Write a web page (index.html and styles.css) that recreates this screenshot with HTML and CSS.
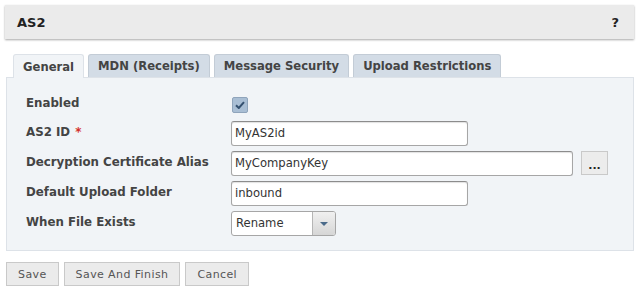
FILE: index.html
```html
<!DOCTYPE html>
<html lang="en">
<head>
    <meta charset="UTF-8">
    <title>AS2</title>
    <link rel="stylesheet" href="styles.css">
</head>
<body>
    <div class="dialog">
        <div class="titlebar">
            <span class="title">AS2</span>
            <span class="help">?</span>
        </div>

        <div class="tabs">
            <div class="tab active">General</div>
            <div class="tab">MDN (Receipts)</div>
            <div class="tab">Message Security</div>
            <div class="tab">Upload Restrictions</div>
        </div>

        <div class="panel">
            <div class="form">
                <label class="label first">Enabled</label>
                <div class="field">
                    <span class="checkbox">
                        <svg width="10" height="8" viewBox="0 0 10 8"><path d="M1 4.2 L3.8 7 L9 1.2" fill="none" stroke="#34506f" stroke-width="2"/></svg>
                    </span>
                </div>

                <label class="label">AS2 ID <span class="req">*</span></label>
                <div class="field"><input class="text" type="text" value="MyAS2id"></div>

                <label class="label">Decryption Certificate Alias</label>
                <div class="field">
                    <input class="text wide" type="text" value="MyCompanyKey">
                    <button class="browse">...</button>
                </div>

                <label class="label">Default Upload Folder</label>
                <div class="field"><input class="text" type="text" value="inbound"></div>

                <label class="label">When File Exists</label>
                <div class="field">
                    <div class="select">
                        <span class="select-value">Rename</span>
                        <span class="select-arrow"></span>
                    </div>
                </div>
            </div>
        </div>

        <div class="actions">
            <button class="btn">Save</button>
            <button class="btn">Save And Finish</button>
            <button class="btn">Cancel</button>
        </div>
    </div>
</body>
</html>
```

FILE: styles.css
```css
* {
    margin: 0;
    padding: 0;
    box-sizing: border-box;
}

body {
    font-family: "DejaVu Sans", Verdana, sans-serif;
    font-size: 12px;
    color: #333;
    background: #fff;
}

.dialog {
    padding: 5px 4px 0 6px;
}

.titlebar {
    height: 34px;
    margin-left: -1px;
    background: #ebebeb;
    box-shadow: 0 1px 2px rgba(0, 0, 0, 0.35);
    display: flex;
    align-items: center;
    justify-content: space-between;
    padding: 0 15px 0 12px;
    font-weight: bold;
    font-size: 13px;
    color: #222;
}

.tabs {
    display: flex;
    gap: 4px;
    margin-top: 15px;
    padding-left: 7px;
}

.tab {
    height: 23px;
    padding: 0 9px;
    display: flex;
    align-items: center;
    font-weight: bold;
    font-size: 11.6px;
    color: #444;
    background: #d3dce6;
    border: 1px solid #c3ccd6;
    border-bottom: none;
    border-radius: 3px 3px 0 0;
}

.tab.active {
    background: #f1f4f7;
    border-color: #dde2e8;
    height: 24px;
    margin-bottom: -1px;
    position: relative;
}

.panel {
    height: 174px;
    background: #f1f4f7;
    border: 1px solid #dde2e8;
    padding: 13px 0 0 19px;
}

.form {
    display: grid;
    grid-template-columns: 205px 1fr;
    grid-auto-rows: 24px;
    row-gap: 6px;
}

.label {
    font-weight: bold;
    font-size: 11.8px;
    color: #444;
    display: flex;
    align-items: center;
    padding-bottom: 3px;
}

.label.first {
    padding-bottom: 0;
}

.req {
    color: #d4302b;
    margin-left: 5px;
}

.field {
    display: flex;
    align-items: center;
}

.checkbox {
    width: 16px;
    height: 16px;
    margin: 4px 0 0 1px;
    background: #a9bed4;
    border: 1px solid #8fa4bb;
    border-radius: 2px;
    display: flex;
    align-items: center;
    justify-content: center;
}

.text {
    width: 237px;
    height: 25px;
    border: 1px solid #a6a6a6;
    border-top-color: #8c8c8c;
    border-radius: 3px;
    box-shadow: inset 0 1px 1px rgba(0, 0, 0, 0.12);
    background: #fff;
    padding: 0 3px;
    font-family: "DejaVu Sans", Verdana, sans-serif;
    font-size: 11.6px;
    color: #333;
}

.text.wide {
    width: 342px;
}

.browse {
    width: 27px;
    height: 24px;
    margin-left: 8px;
    background: #ececec;
    border: 1px solid #c9c9c9;
    font-family: "DejaVu Sans", Verdana, sans-serif;
    font-weight: bold;
    font-size: 11px;
    color: #222;
    padding-top: 4px;
}

.select {
    width: 105px;
    height: 25px;
    display: flex;
    border: 1px solid #a6a6a6;
    border-radius: 3px;
    background: #fff;
    overflow: hidden;
    font-size: 11.6px;
}

.select-value {
    flex: 1;
    padding-left: 4px;
    display: flex;
    align-items: center;
}

.select-arrow {
    width: 23px;
    border-left: 1px solid #b5b5b5;
    background: linear-gradient(#f0f0f0, #d6d6d6);
    position: relative;
}

.select-arrow:after {
    content: "";
    position: absolute;
    left: 7px;
    top: 10px;
    border-left: 4px solid transparent;
    border-right: 4px solid transparent;
    border-top: 4px solid #4a6a8a;
}

.actions {
    display: flex;
    gap: 5px;
    margin-top: 11px;
}

.btn {
    height: 24px;
    padding: 0 11px;
    background: #ebebeb;
    border: 1px solid #c9c9c9;
    font-family: "DejaVu Sans", Verdana, sans-serif;
    font-size: 11px;
    letter-spacing: 0.4px;
    color: #555;
}
```
